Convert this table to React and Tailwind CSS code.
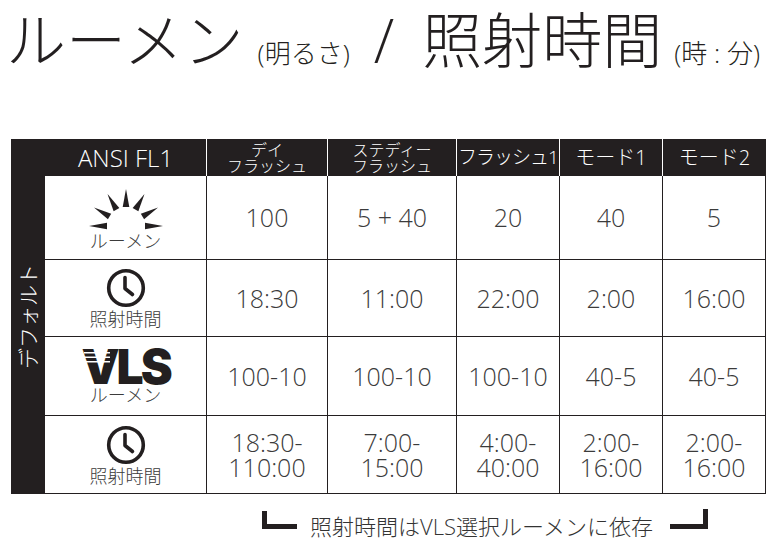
import React from 'react';

const SunIcon = () => {
  const angles = [0, 30, 60, 90, 120, 150, 180];
  return (
    <svg width="78" height="44" viewBox="0 0 78 44">
      {angles.map((a) => (
        <polygon
          key={a}
          points="19,-3.3 37,0 19,3.3"
          fill="#231f20"
          transform={`translate(39 40) rotate(${-a})`}
        />
      ))}
    </svg>
  );
};

const ClockIcon = () => (
  <svg width="40" height="40" viewBox="0 0 40 40" fill="none" stroke="#231f20" strokeWidth="3.6">
    <circle cx="20" cy="20" r="17.3" />
    <path d="M19 9.5V20.5L26.5 26.5" strokeLinecap="round" strokeLinejoin="round" />
  </svg>
);

const VlsLogo = () => (
  <div className="relative flex h-[35px] w-[88px] items-center justify-center">
    <span className="font-['Inter',sans-serif] text-[48px] font-black leading-[35px] tracking-[-3px] text-[#231f20]">
      VLS
    </span>
    <svg className="absolute left-[2px] top-0" width="26" height="16" viewBox="0 0 26 16">
      <rect x="0" y="3" width="26" height="1.5" fill="#fff" />
      <rect x="0" y="7.5" width="26" height="1.5" fill="#fff" />
      <rect x="0" y="12" width="26" height="1.5" fill="#fff" />
    </svg>
  </div>
);

const Label = ({ children }) => (
  <span className="text-[18px] leading-[18px] text-[#3b3b3b]">{children}</span>
);

const rows = [
  {
    h: 'h-[84px]',
    icon: <SunIcon />,
    label: 'ルーメン',
    values: ['100', '5 + 40', '20', '40', '5'],
  },
  {
    h: 'h-[77px]',
    icon: <ClockIcon />,
    label: '照射時間',
    values: ['18:30', '11:00', '22:00', '2:00', '16:00'],
  },
  {
    h: 'h-[79px]',
    icon: <VlsLogo />,
    label: 'ルーメン',
    values: ['100-10', '100-10', '100-10', '40-5', '40-5'],
  },
  {
    h: 'h-[78px]',
    icon: <ClockIcon />,
    label: '照射時間',
    values: [
      ['18:30-', '110:00'],
      ['7:00-', '15:00'],
      ['4:00-', '40:00'],
      ['2:00-', '16:00'],
      ['2:00-', '16:00'],
    ],
  },
];

const headCell = 'flex h-[37px] flex-col items-center justify-center bg-[#231f20] text-white';

const App = () => {
  return (
    <div className="h-[542px] w-[779px] overflow-hidden bg-white font-['Open_Sans','Noto_Sans_CJK_JP',sans-serif] font-light text-[#231f20]">
      {/* title */}
      <div className="flex h-[70px] items-baseline pl-[6px] pt-[10px] leading-none">
        <span className="text-[60px]">ルーメン</span>
        <span className="ml-[14px] text-[26px]">(明るさ)</span>
        <span className="ml-[24px] text-[60px]">/</span>
        <span className="ml-[28px] text-[60px]">照射時間</span>
        <span className="ml-[12px] text-[26px]">(時 : 分)</span>
      </div>

      {/* table */}
      <div className="ml-[11px] mt-[69px] grid w-[755px] grid-cols-[34px_162px_121px_129px_103px_103px_103px]">
        <div className="row-span-5 flex items-center justify-center bg-[#231f20]">
          <span className="rotate-180 text-[21px] leading-none text-white [text-orientation:sideways] [writing-mode:vertical-rl]">
            デフォルト
          </span>
        </div>

        <div className={`${headCell} border-r border-white text-[24px] leading-none`}>ANSI FL1</div>
        <div className={`${headCell} border-r border-white text-[16px] leading-[16px]`}>
          <span>デイ</span>
          <span>フラッシュ</span>
        </div>
        <div className={`${headCell} border-r border-white text-[16px] leading-[16px]`}>
          <span>ステディー</span>
          <span>フラッシュ</span>
        </div>
        <div className={`${headCell} border-r border-white text-[19px] leading-none tracking-[-1px]`}>フラッシュ1</div>
        <div className={`${headCell} border-r border-white text-[20px] leading-none`}>モード1</div>
        <div className={`${headCell} text-[20px] leading-none`}>モード2</div>

        {rows.map((row, i) => (
          <React.Fragment key={i}>
            <div className={`${row.h} flex flex-col items-center justify-center gap-[2px] border-b border-r border-[#231f20]`}>
              {row.icon}
              <Label>{row.label}</Label>
            </div>
            {row.values.map((v, j) => (
              <div
                key={j}
                className={`${row.h} flex flex-col items-center justify-center border-b border-r border-[#231f20] text-[25px] leading-[25px] text-[#3b3b3b]`}
              >
                {Array.isArray(v) ? v.map((line) => <span key={line}>{line}</span>) : <span>{v}</span>}
              </div>
            ))}
          </React.Fragment>
        ))}
      </div>

      {/* footnote */}
      <div className="mt-[15px] flex items-center pl-[262px]">
        <div className="mb-[12px] h-[18px] w-[35px] border-b-[5px] border-l-[5px] border-[#231f20]" />
        <span className="ml-[13px] text-[22px] leading-[26px] text-[#333]">照射時間はVLS選択ルーメンに依存</span>
        <div className="mb-[14px] ml-[17px] h-[20px] w-[38px] border-b-[5px] border-r-[5px] border-[#231f20]" />
      </div>
    </div>
  );
};

export default App;
